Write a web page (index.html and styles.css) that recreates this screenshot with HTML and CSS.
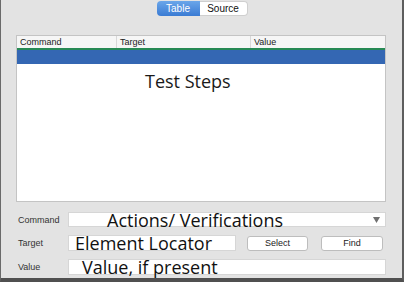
FILE: index.html
```html
<!DOCTYPE html>
<html lang="en">
<head>
  <meta charset="UTF-8" />
  <title>Test Case Editor</title>
  <link rel="stylesheet" href="styles.css">
</head>
<body>
  <div class="window">
    <div class="tabs">
      <span class="tab active">Table</span>
      <span class="tab">Source</span>
    </div>

    <div class="steps">
      <div class="steps-head">
        <span class="col col-cmd">Command</span>
        <span class="col col-target">Target</span>
        <span class="col col-value">Value</span>
      </div>
      <div class="steps-selected"></div>
      <div class="steps-body">Test Steps</div>
    </div>

    <div class="form">
      <label class="field-label">Command</label>
      <div class="field field-select">
        <span class="field-text cmd-text">Actions/ Verifications</span>
        <svg class="arrow" width="7" height="6" viewBox="0 0 7 6"><polygon points="0,0 7,0 3.5,6" fill="#707070"/></svg>
      </div>

      <label class="field-label">Target</label>
      <div class="target-row">
        <div class="field field-target">
          <span class="field-text target-text">Element Locator</span>
        </div>
        <button class="btn btn-select">Select</button>
        <button class="btn btn-find">Find</button>
      </div>

      <label class="field-label">Value</label>
      <div class="field">
        <span class="field-text value-text">Value, if present</span>
      </div>
    </div>
  </div>
</body>
</html>
```

FILE: styles.css
```css
body {
  margin: 0;
  font-family: "Liberation Sans", Arial, sans-serif;
}

.window {
  width: 404px;
  height: 282px;
  box-sizing: border-box;
  background-color: #e3e3e3;
  border-left: 1px solid #6a6a6a;
  border-right: 2px solid #5e5e5e;
  border-bottom: 4px solid #505050;
  overflow: hidden;
}

.tabs {
  display: flex;
  justify-content: center;
  padding-top: 1px;
  padding-left: 1px;
}

.tab {
  height: 15px;
  line-height: 15px;
  font-size: 10px;
  text-align: center;
  background-color: #fff;
  color: #111;
  box-sizing: border-box;
}

.tab.active {
  width: 43px;
  color: #fff;
  background: linear-gradient(#6aa6ea, #3a7bd3);
  border-radius: 4px 0 0 4px;
}

.tab:last-child {
  width: 48px;
  border: 1px solid #cfcfcf;
  border-left: none;
  border-radius: 0 4px 4px 0;
  line-height: 13px;
}

.steps {
  margin: 19px 16px 0 15px;
  height: 167px;
  background-color: #fff;
  border: 1px solid #c4c4c4;
  box-sizing: border-box;
}

.steps-head {
  display: flex;
  height: 12px;
  background-color: #f6f6f6;
  font-size: 9px;
  line-height: 12px;
  color: #222;
}

.col {
  padding-left: 3px;
  box-sizing: border-box;
}

.col-cmd {
  width: 99px;
}

.col-target {
  width: 134px;
  border-left: 1px solid #d8d8d8;
}

.col-value {
  flex: 1;
  border-left: 1px solid #d8d8d8;
}

.steps-selected {
  height: 14px;
  background-color: #3467b3;
  border-top: 2px solid #278a55;
}

.steps-body {
  margin-top: 7px;
  padding-left: 128px;
  font-family: "Open Sans", sans-serif;
  font-size: 18px;
  line-height: 20px;
  color: #1a1a1a;
}

.form {
  display: grid;
  grid-template-columns: 50px 1fr;
  row-gap: 8px;
  margin-top: 10px;
  padding: 0 16px 0 17px;
}

.field-label {
  font-size: 9px;
  color: #333;
  align-self: center;
}

.field {
  height: 16px;
  background-color: #fff;
  border: 1px solid #d6d6d6;
  box-sizing: border-box;
  display: flex;
  align-items: flex-start;
}

.field-select {
  height: 15px;
  justify-content: space-between;
  padding-right: 5px;
}

.arrow {
  align-self: center;
}

.field-text {
  font-family: "Open Sans", sans-serif;
  font-size: 18px;
  line-height: 14px;
  color: #111;
  white-space: nowrap;
}

.cmd-text {
  padding-left: 38px;
}

.target-text {
  padding-left: 6px;
}

.value-text {
  padding-left: 13px;
}

.target-row {
  display: flex;
  align-items: center;
}

.field-target {
  width: 168px;
}

.btn {
  height: 15px;
  padding: 0;
  background-color: #fff;
  border: 1px solid #bdbdbd;
  border-radius: 3px;
  font-family: "Liberation Sans", Arial, sans-serif;
  font-size: 9px;
  color: #222;
}

.btn-select {
  width: 61px;
  margin-left: 11px;
}

.btn-find {
  width: 62px;
  margin-left: 13px;
}
```
